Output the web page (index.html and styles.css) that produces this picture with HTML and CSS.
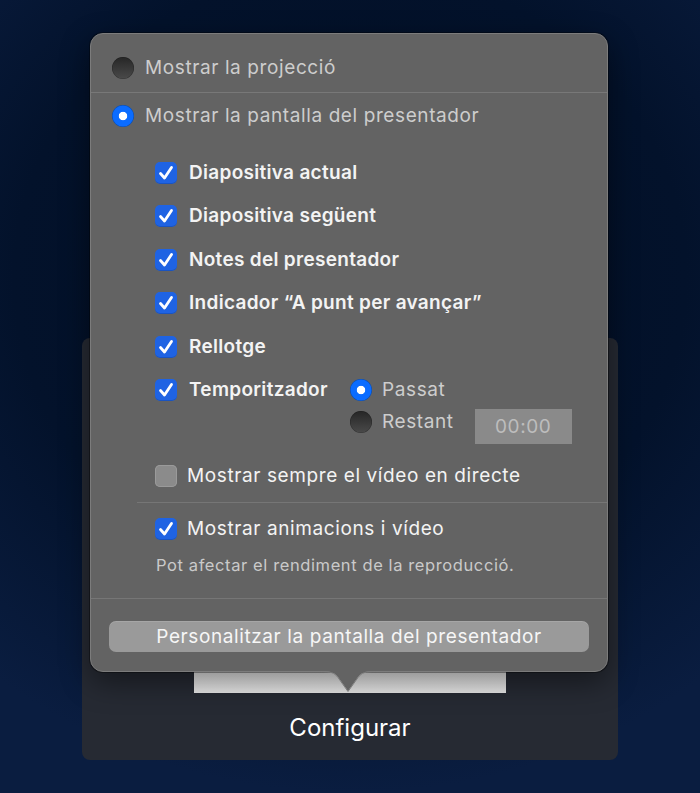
FILE: index.html
```html
<!DOCTYPE html>
<html>
<head lang="ca">
    <meta charset="UTF-8">
    <title>Configurar</title>
    <link rel="stylesheet" href="styles.css">
</head>
<body>
<div id="stage">
    <div class="panel">
        <div class="thumb"></div>
        <div class="panel-title">Configurar</div>
    </div>

    <div class="popover">
        <div class="row row-first">
            <span class="radio"></span>
            <span class="dim">Mostrar la projecció</span>
        </div>
        <div class="row row-second">
            <span class="radio on"></span>
            <span class="dim">Mostrar la pantalla del presentador</span>
        </div>

        <ul class="checks">
            <li><span class="box on"></span><span class="strong">Diapositiva actual</span></li>
            <li><span class="box on"></span><span class="strong">Diapositiva següent</span></li>
            <li><span class="box on"></span><span class="strong">Notes del presentador</span></li>
            <li><span class="box on"></span><span class="strong">Indicador “A punt per avançar”</span></li>
            <li><span class="box on"></span><span class="strong">Rellotge</span></li>
            <li class="timer">
                <div class="timer-check"><span class="box on"></span><span class="strong">Temporitzador</span></div>
                <div class="timer-options">
                    <div class="opt"><span class="radio on"></span><span class="dim">Passat</span></div>
                    <div class="opt"><span class="radio"></span><span class="dim">Restant</span><span class="time">00:00</span></div>
                </div>
            </li>
        </ul>

        <div class="check-row live"><span class="box"></span><span>Mostrar sempre el vídeo en directe</span></div>
        <div class="sep sep-indent"></div>
        <div class="check-row anim"><span class="box on"></span><span>Mostrar animacions i vídeo</span></div>
        <p class="note">Pot afectar el rendiment de la reproducció.</p>
        <div class="sep"></div>
        <div class="btn">Personalitzar la pantalla del presentador</div>

        <svg class="arrow" width="56" height="23" viewBox="0 0 56 23">
            <path d="M0 0 L0 1 C11 1 14 2 18 7 L28 21 L38 7 C42 2 45 1 56 1 L56 0 Z" fill="#636363"/>
            <path d="M0 1.5 C11 1.5 14 2.5 18 7.5 L28 21.5 L38 7.5 C42 2.5 45 1.5 56 1.5" fill="none" stroke="#7c7c7c" stroke-width="1"/>
        </svg>
    </div>
</div>
</body>
</html>
```

FILE: styles.css
```css
*{
    margin: 0;
    padding: 0;
    box-sizing: border-box;
}
li{
    list-style: none;
}
body{
    width: 700px;
    height: 793px;
    overflow: hidden;
    font-family: Inter, "Liberation Sans", sans-serif;
    background: radial-gradient(ellipse 80% 65% at 50% 35%, #020e24 0%, #03122b 60%, #0a1d40 100%);
}
#stage{
    position: relative;
    width: 700px;
    height: 793px;
    padding: 338px 0 0 82px;
}
.panel{
    width: 536px;
    height: 422px;
    background: #262a33;
    border-radius: 8px;
    padding-top: 40px;
}
.thumb{
    width: 312px;
    height: 315px;
    margin: 0 auto;
    background: linear-gradient(#f4f4f4, #e9e9e9);
}
.panel-title{
    margin-top: 20px;
    height: 30px;
    line-height: 30px;
    text-align: center;
    color: #ffffff;
    font-size: 24px;
}

.popover{
    position: absolute;
    left: 90px;
    top: 33px;
    width: 518px;
    height: 639px;
    background: #636363;
    border: 1px solid #7c7c7c;
    border-radius: 13px;
    box-shadow: 0 0 0 1px rgba(0, 0, 0, 0.35), 0 10px 30px rgba(0, 0, 0, 0.45);
    font-size: 19px;
    line-height: 22px;
    letter-spacing: 0.6px;
    color: #f3f3f3;
}
.row{
    display: flex;
    align-items: center;
    gap: 11px;
    padding-left: 21px;
}
.row-first{
    padding-top: 23px;
    padding-bottom: 13px;
    border-bottom: 1px solid #787878;
}
.row-second{
    padding-top: 12px;
}
.dim{
    color: #cdcdcd;
}
.strong{
    font-weight: 600;
    letter-spacing: 0.3px;
}

.radio{
    flex: none;
    width: 22px;
    height: 22px;
    border-radius: 50%;
    background: linear-gradient(#262626, #4a4a4a);
    box-shadow: inset 0 0 0 0.5px rgba(0, 0, 0, 0.3);
}
.radio.on{
    background: radial-gradient(circle, #ffffff 0 3.8px, #0b6cff 4.6px);
}
.box{
    flex: none;
    width: 22px;
    height: 22px;
    border-radius: 5px;
    background: #8b8b8b;
    box-shadow: inset 0 0 0 1px #9a9a9a;
}
.box.on{
    background: #1f63e3 url("data:image/svg+xml;utf8,<svg xmlns='http://www.w3.org/2000/svg' width='22' height='22'><path d='M5.5 11.5 L9.5 16 L16.5 5.5' fill='none' stroke='white' stroke-width='2.8' stroke-linecap='round' stroke-linejoin='round'/></svg>") no-repeat center;
    box-shadow: inset 0 -1px 0 rgba(0, 0, 0, 0.15);
}

.checks{
    margin-top: 35px;
    padding-left: 64px;
    display: flex;
    flex-direction: column;
    gap: 21.4px;
}
.checks li{
    display: flex;
    align-items: center;
    gap: 12px;
}
.checks li.timer{
    align-items: flex-start;
    gap: 0;
}
.timer-check{
    display: flex;
    align-items: center;
    gap: 12px;
    width: 195px;
}
.timer-options{
    display: flex;
    flex-direction: column;
    gap: 10px;
}
.opt{
    display: flex;
    align-items: center;
    gap: 10px;
    height: 22px;
}
.time{
    width: 97px;
    height: 35px;
    margin-left: 11px;
    margin-top: 9px;
    background: #8a8a8a;
    color: #bdbdbd;
    text-align: center;
    line-height: 35px;
}

.check-row{
    display: flex;
    align-items: center;
    gap: 10px;
    padding-left: 64px;
}
.live{
    margin-top: 32px;
    margin-bottom: 15px;
}
.sep{
    height: 1px;
    background: #767676;
}
.sep-indent{
    margin-left: 46px;
}
.anim{
    margin-top: 15px;
}
.note{
    margin: 15px 0 23px 65px;
    font-size: 16.5px;
    line-height: 20px;
    letter-spacing: 0.6px;
    color: #cacaca;
}
.btn{
    margin: 22px 18px 0;
    height: 31px;
    line-height: 31px;
    border-radius: 7px;
    background: #9a9a9a;
    box-shadow: inset 0 1px 0 rgba(255, 255, 255, 0.12);
    text-align: center;
    color: #f6f6f6;
}
.arrow{
    position: absolute;
    left: 229px;
    bottom: -22px;
}
```
